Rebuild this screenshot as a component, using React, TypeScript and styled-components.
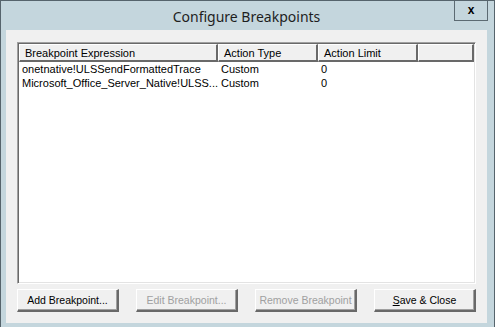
import React from 'react'
import styled, { createGlobalStyle } from 'styled-components'

const GlobalStyle = createGlobalStyle`
  html, body {
    margin: 0;
    padding: 0;
    background: #c4d6dd;
  }
`

const Window = styled.div`
  box-sizing: border-box;
  width: 495px;
  height: 327px;
  background: #c4d6dd;
  border: 1px solid #56646c;
  border-bottom: none;
  padding: 0 7px 0 5px;
  display: flex;
  flex-direction: column;
  font-family: 'Liberation Sans', Arial, sans-serif;
  overflow: hidden;
`

const TitleBar = styled.div`
  position: relative;
  height: 29px;
  flex-shrink: 0;
  display: flex;
  align-items: center;
  justify-content: center;
`

const Title = styled.div`
  font-family: 'Noto Sans', 'Open Sans', sans-serif;
  font-size: 14px;
  color: #1e1e1e;
  padding-top: 2px;
`

const CloseButton = styled.div`
  position: absolute;
  top: -1px;
  right: -1px;
  width: 32px;
  height: 20px;
  border: 1px solid #5c6a72;
  border-top: none;
  display: flex;
  align-items: center;
  justify-content: center;
  font-family: 'Liberation Sans', Arial, sans-serif;
  font-weight: bold;
  font-size: 12px;
  color: #000;
  line-height: 1;
`

const Client = styled.div`
  box-sizing: border-box;
  background: #f0f0f0;
  height: 293px;
  padding: 12px 11px 11px 11px;
  display: flex;
  flex-direction: column;
  gap: 5px;
`

const ListBox = styled.div`
  box-sizing: border-box;
  flex: 1;
  background: #fff;
  border-style: solid;
  border-width: 1px;
  border-color: #a0a0a0 #fff #fff #a0a0a0;
  box-shadow: inset 1px 1px 0 #696969, inset -1px -1px 0 #e3e3e3;
  padding: 1px;
  font-size: 11px;
  color: #000;
`

const Grid = styled.div`
  display: grid;
  grid-template-columns: 199px 100px 100px 1fr;
`

const HeaderCell = styled.div`
  box-sizing: border-box;
  height: 18px;
  background: #f0f0f0;
  border-style: solid;
  border-width: 1px 2px 2px 1px;
  border-color: #fff #696969 #696969 #fff;
  padding: 0 0 0 5px;
  display: flex;
  align-items: center;
  white-space: nowrap;
  overflow: hidden;
`

const Cell = styled.div`
  height: 14px;
  line-height: 14px;
  padding-left: 3px;
  white-space: nowrap;
  overflow: hidden;
`

const ButtonRow = styled.div`
  display: flex;
  justify-content: space-between;
  height: 23px;
  flex-shrink: 0;
`

const Button = styled.div<{ $disabled?: boolean }>`
  box-sizing: border-box;
  width: 102px;
  height: 23px;
  background: #f0f0f0;
  border-style: solid;
  border-width: 1px 2px 2px 1px;
  border-color: #fff #696969 #696969 #fff;
  box-shadow: inset -1px -1px 0 #a0a0a0;
  display: flex;
  align-items: center;
  justify-content: center;
  font-size: 10.5px;
  color: ${({ $disabled }) => ($disabled ? '#a0a0a0' : '#000')};
  white-space: nowrap;
`

const Key = styled.span`
  text-decoration: underline;
`

const columns = ['Breakpoint Expression', 'Action Type', 'Action Limit', '']

const rows = [
  ['onetnative!ULSSendFormattedTrace', 'Custom', '0', ''],
  ['Microsoft_Office_Server_Native!ULSS...', 'Custom', '0', ''],
]

export default function App() {
  return (
    <>
      <GlobalStyle />
      <Window>
        <TitleBar>
          <Title>Configure Breakpoints</Title>
          <CloseButton>x</CloseButton>
        </TitleBar>
        <Client>
          <ListBox>
            <Grid>
              {columns.map((c, i) => (
                <HeaderCell key={i}>{c}</HeaderCell>
              ))}
              {rows.map((r, ri) =>
                r.map((v, ci) => <Cell key={ri + '-' + ci}>{v}</Cell>)
              )}
            </Grid>
          </ListBox>
          <ButtonRow>
            <Button>Add Breakpoint...</Button>
            <Button $disabled>Edit Breakpoint...</Button>
            <Button $disabled>Remove Breakpoint</Button>
            <Button>
              <Key>S</Key>ave &amp; Close
            </Button>
          </ButtonRow>
        </Client>
      </Window>
    </>
  )
}
